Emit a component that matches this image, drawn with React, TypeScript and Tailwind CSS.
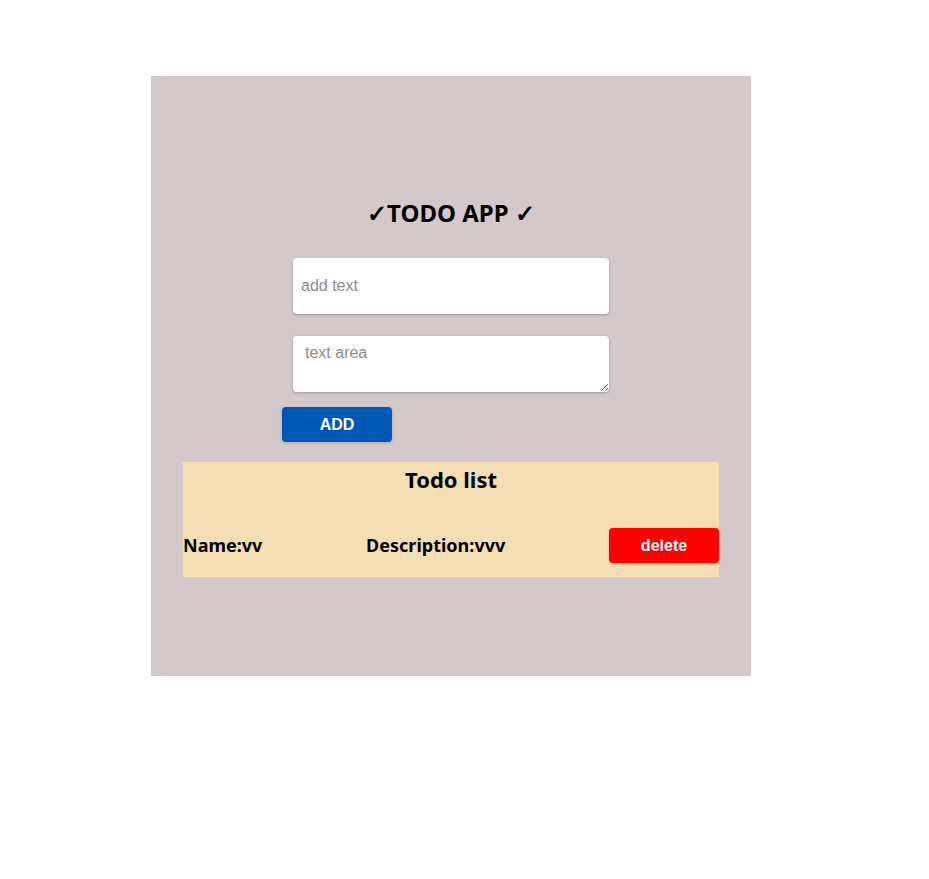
import React, { useState } from 'react';

type Todo = { name: string; description: string };

const App: React.FC = () => {
  const [name, setName] = useState('');
  const [description, setDescription] = useState('');
  const [todos, setTodos] = useState<Todo[]>([{ name: 'vv', description: 'vvv' }]);

  const addTodo = () => {
    if (!name && !description) return;
    setTodos([...todos, { name, description }]);
    setName('');
    setDescription('');
  };

  return (
    <div className="min-h-screen bg-white pt-[76px] pl-[151px]">
      <div className="flex h-[600px] w-[600px] flex-col items-center bg-[#d3c9ca] pt-[121px]">
        <h1 className="font-['Noto_Sans',sans-serif] text-[24px] leading-[32px] font-bold text-black">
          ✓TODO APP ✓
        </h1>

        {/* form */}
        <input
          type="text"
          value={name}
          onChange={(e) => setName(e.target.value)}
          placeholder="add text"
          className="mt-[29px] h-[56px] w-[316px] rounded-[4px] bg-white px-2 font-['Liberation_Sans',sans-serif] text-base text-black shadow-[0_1px_3px_rgba(0,0,0,0.25)] outline-none placeholder:text-[#8e8e8e]"
        />
        <textarea
          value={description}
          onChange={(e) => setDescription(e.target.value)}
          placeholder="text area"
          className="mt-[22px] h-[56px] w-[316px] rounded-[4px] bg-white px-3 py-2 font-['Liberation_Sans',sans-serif] text-base leading-[18px] text-black shadow-[0_1px_3px_rgba(0,0,0,0.25)] outline-none placeholder:text-[#8e8e8e]"
        />
        <button
          onClick={addTodo}
          className="mt-[15px] ml-[131px] h-[35px] w-[110px] self-start rounded-[4px] bg-[#0056b3] font-['Liberation_Sans',sans-serif] text-base font-bold text-white shadow-[0_1px_3px_rgba(0,0,0,0.2)]"
        >
          ADD
        </button>

        {/* list */}
        <div className="mt-[20px] w-[536px] bg-[#f5deb3] pb-[14px]">
          <h2 className="pt-[2px] text-center font-['Noto_Sans',sans-serif] text-[22px] leading-[30px] font-bold text-black">
            Todo list
          </h2>
          <div className="mt-[34px] flex flex-col gap-2">
            {todos.map((todo, i) => (
              <div key={i} className="flex items-center justify-between">
                <span className="font-['Noto_Sans',sans-serif] text-[18px] font-bold text-black">
                  Name:{todo.name}
                </span>
                <span className="font-['Noto_Sans',sans-serif] text-[18px] font-bold text-black">
                  Description:{todo.description}
                </span>
                <button
                  onClick={() => setTodos(todos.filter((_, j) => j !== i))}
                  className="h-[35px] w-[110px] rounded-[4px] bg-[#ff0000] font-['Liberation_Sans',sans-serif] text-base font-bold text-white shadow-[0_1px_3px_rgba(0,0,0,0.2)]"
                >
                  delete
                </button>
              </div>
            ))}
          </div>
        </div>
      </div>
    </div>
  );
};

export default App;
